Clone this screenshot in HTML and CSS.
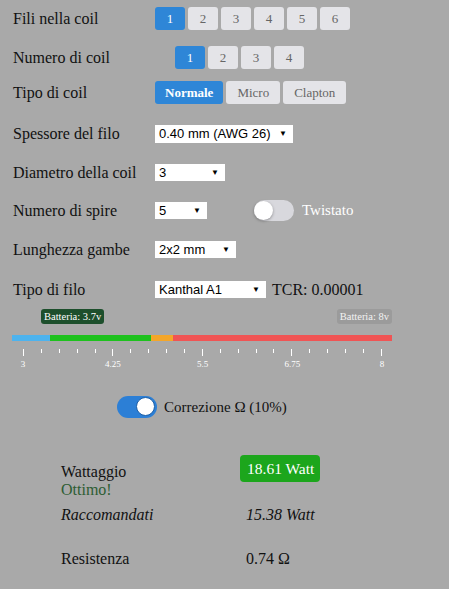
FILE: index.html
```html
<!DOCTYPE html>
<html lang="it">
<head>
<meta charset="utf-8">
<title>Coil calculator</title>
<link rel="stylesheet" href="styles.css">
</head>
<body>
<main class="form">
  <div class="row">
    <span class="label">Fili nella coil</span>
    <div class="btn-group">
      <span class="btn active">1</span><span class="btn">2</span><span class="btn">3</span><span class="btn">4</span><span class="btn">5</span><span class="btn">6</span>
    </div>
  </div>
  <div class="row">
    <span class="label">Numero di coil</span>
    <div class="btn-group indent">
      <span class="btn active">1</span><span class="btn">2</span><span class="btn">3</span><span class="btn">4</span>
    </div>
  </div>
  <div class="row tight">
    <span class="label">Tipo di coil</span>
    <div class="btn-group">
      <span class="btn wide active bold">Normale</span><span class="btn wide">Micro</span><span class="btn wide">Clapton</span>
    </div>
  </div>
  <div class="row loose">
    <span class="label">Spessore del filo</span>
    <div class="select w-137"><span>0.40 mm (AWG 26)</span><span class="arrow">▼</span></div>
  </div>
  <div class="row">
    <span class="label">Diametro della coil</span>
    <div class="select w-70"><span>3</span><span class="arrow">▼</span></div>
  </div>
  <div class="row snug">
    <span class="label">Numero di spire</span>
    <div class="select w-52"><span>5</span><span class="arrow">▼</span></div>
    <span class="switch off spaced"><span class="knob"></span></span>
    <span class="switch-label light">Twistato</span>
  </div>
  <div class="row">
    <span class="label">Lunghezza gambe</span>
    <div class="select w-81"><span>2x2 mm</span><span class="arrow">▼</span></div>
  </div>
  <div class="row wide-gap">
    <span class="label">Tipo di filo</span>
    <div class="select w-111"><span>Kanthal A1</span><span class="arrow">▼</span></div>
    <span class="tcr">TCR: 0.00001</span>
  </div>

  <section class="scale">
    <div class="markers">
      <span class="battery low">Batteria: 3.7v</span>
      <span class="battery high">Batteria: 8v</span>
    </div>
    <div class="bar">
      <span class="seg blue"></span><span class="seg green"></span><span class="seg orange"></span><span class="seg red"></span>
    </div>
    <div class="ticks">
      <i class="major"></i><i></i><i></i><i></i><i></i>
      <i class="major"></i><i></i><i></i><i></i><i></i>
      <i class="major"></i><i></i><i></i><i></i><i></i>
      <i class="major"></i><i></i><i></i><i></i><i></i>
      <i class="major"></i>
    </div>
    <div class="tick-labels">
      <span>3</span><span>4.25</span><span>5.5</span><span>6.75</span><span>8</span>
    </div>
  </section>

  <div class="correction">
    <span class="switch on"><span class="knob"></span></span>
    <span class="switch-label">Correzione Ω (10%)</span>
  </div>

  <section class="results">
    <div class="cell first">Wattaggio<br><span class="good">Ottimo!</span></div>
    <div class="cell"><span class="badge">18.61 Watt</span></div>
    <div class="cell em">Raccomandati</div>
    <div class="cell value em">15.38 Watt</div>
    <div class="cell gap">Resistenza</div>
    <div class="cell value gap">0.74 Ω</div>
  </section>
</main>
</body>
</html>
```

FILE: styles.css
```css
html, body {
  margin: 0;
  padding: 0;
  background: #a9a9a9;
}

body {
  font-family: "Liberation Serif", "Times New Roman", serif;
  font-size: 16px;
  color: #111;
  width: 449px;
  height: 589px;
  overflow: hidden;
}

.form {
  padding: 7px 0 0 13px;
}

.row {
  display: flex;
  align-items: center;
  height: 23px;
  margin-top: 16px;
}

.row:first-child {
  margin-top: 0;
}

.row.tight {
  margin-top: 12px;
}

.row.loose {
  margin-top: 18px;
}

.row.snug {
  margin-top: 15px;
}

.row.wide-gap {
  margin-top: 17px;
}

.label {
  width: 142px;
  flex: none;
}

.btn-group {
  display: flex;
  gap: 3px;
}

.btn-group.indent {
  margin-left: 20px;
}

.btn {
  display: inline-flex;
  align-items: center;
  justify-content: center;
  width: 30px;
  height: 23px;
  background: #e4e4e8;
  color: #666;
  font-size: 13px;
  border-radius: 3px;
}

.btn.wide {
  width: auto;
  padding: 0 11px;
}

.btn.active {
  background: #2e86d7;
  color: #fff;
}

.btn.bold {
  font-weight: bold;
  padding: 0 10px;
}

.select {
  display: flex;
  align-items: center;
  justify-content: space-between;
  height: 17px;
  padding: 0 6px 0 4px;
  background: #fff;
  color: #000;
  font-family: "Liberation Sans", Arial, sans-serif;
  font-size: 13px;
  box-sizing: border-box;
}

.select .arrow {
  font-size: 8px;
}

.w-137 { width: 138px; height: 18px; }
.w-70 { width: 70px; }
.w-52 { width: 52px; }
.w-81 { width: 81px; }
.w-111 { width: 111px; }

.switch {
  position: relative;
  display: inline-block;
  width: 40px;
  height: 21px;
  border-radius: 11px;
  flex: none;
}

.switch .knob {
  position: absolute;
  top: 1px;
  width: 19px;
  height: 19px;
  border-radius: 50%;
  background: #fff;
}

.switch.off {
  background: #d8d8dd;
}

.switch.off .knob {
  left: 0;
  box-shadow: 0 1px 3px rgba(0, 0, 0, 0.35);
}

.switch.on {
  background: #2c7fd6;
  height: 22px;
}

.switch.on .knob {
  right: 2px;
  top: 1px;
  width: 17px;
  height: 17px;
  border: 1px solid #1e5fa6;
  box-sizing: content-box;
}

.switch.spaced {
  margin-left: 47px;
}

.switch-label {
  margin-left: 8px;
  font-size: 15px;
}

.switch-label.light {
  color: #fff;
}

.tcr {
  margin-left: 6px;
}

.scale {
  margin: 8px 0 0 -1px;
  width: 380px;
}

.markers {
  position: relative;
  height: 26px;
}

.battery {
  position: absolute;
  top: 0;
  height: 15px;
  line-height: 15px;
  padding: 0 3px;
  font-size: 10.5px;
  color: #fff;
  border-radius: 3px;
  white-space: nowrap;
}

.battery.low {
  left: 29px;
  background: #1d4f2c;
}

.battery.high {
  right: 0;
  background: #9b9b9b;
  color: #f2f2f2;
}

.bar {
  display: flex;
  height: 6px;
}

.seg.blue { width: 38px; background: #4db3ee; }
.seg.green { width: 101px; background: #1ec11e; }
.seg.orange { width: 22px; background: #f4a62a; }
.seg.red { flex: 1; background: #f05454; }

.ticks {
  display: flex;
  justify-content: space-between;
  align-items: flex-start;
  width: 359px;
  margin: 8px 0 0 11px;
  height: 7px;
}

.ticks i {
  width: 1px;
  height: 4px;
  background: #fff;
}

.ticks i.major {
  height: 7px;
}

.tick-labels {
  display: flex;
  justify-content: space-between;
  width: 389px;
  margin: 3px 0 0 -4px;
  font-size: 9px;
  line-height: 10px;
  color: #fff;
}

.tick-labels span {
  width: 30px;
  text-align: center;
}

.correction {
  display: flex;
  align-items: center;
  margin: 27px 0 0 104px;
}

.correction .switch-label {
  margin-left: 7px;
}

.results {
  display: grid;
  grid-template-columns: 179px auto;
  align-items: start;
  row-gap: 7px;
  margin: 37px 0 0 48px;
  line-height: 18px;
}

.cell.first {
  padding-top: 8px;
}

.good {
  color: #2d5d33;
}

.badge {
  display: inline-block;
  height: 27px;
  line-height: 27px;
  padding: 0 6px 0 7px;
  border-radius: 4px;
  background: #1ca61c;
  color: #fff;
  font-size: 15.5px;
}

.cell.value {
  padding-left: 6px;
}

.cell.em {
  font-style: italic;
}

.cell.gap {
  margin-top: 19px;
}
```
